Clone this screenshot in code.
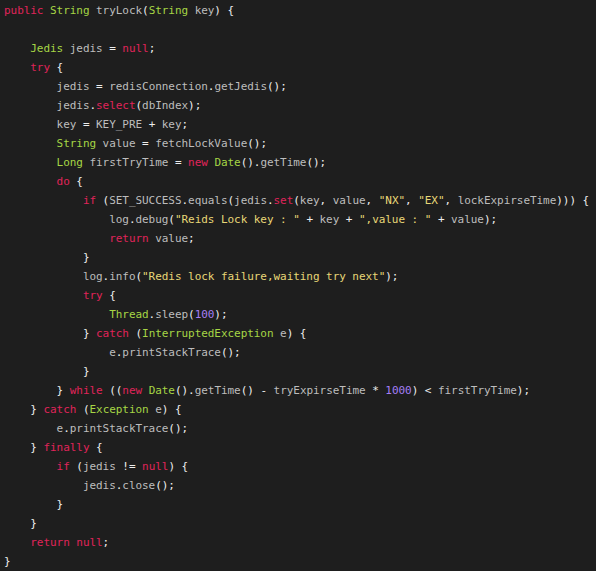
const LINES = [
  "public String tryLock(String key) {",
  "",
  "    Jedis jedis = null;",
  "    try {",
  "        jedis = redisConnection.getJedis();",
  "        jedis.select(dbIndex);",
  "        key = KEY_PRE + key;",
  "        String value = fetchLockValue();",
  "        Long firstTryTime = new Date().getTime();",
  "        do {",
  '            if (SET_SUCCESS.equals(jedis.set(key, value, "NX", "EX", lockExpirseTime))) {',
  '                log.debug("Reids Lock key : " + key + ",value : " + value);',
  "                return value;",
  "            }",
  '            log.info("Redis lock failure,waiting try next");',
  "            try {",
  "                Thread.sleep(100);",
  "            } catch (InterruptedException e) {",
  "                e.printStackTrace();",
  "            }",
  "        } while ((new Date().getTime() - tryExpirseTime * 1000) < firstTryTime);",
  "    } catch (Exception e) {",
  "        e.printStackTrace();",
  "    } finally {",
  "        if (jedis != null) {",
  "            jedis.close();",
  "        }",
  "    }",
  "    return null;",
  "}",
];

const KEYWORDS = ["public", "null", "try", "new", "do", "if", "return", "catch", "finally", "while", "select", "set"];
const TYPES = ["String", "Jedis", "Long", "Date", "Thread", "InterruptedException", "Exception"];

const COLORS = {
  kw: "text-[#e0245a]",
  type: "text-[#a6d645]",
  str: "text-[#e8d777]",
  num: "text-[#a57ef5]",
  punct: "text-[#eeeeee]",
  plain: "text-[#bdbdbd]",
  space: "",
};

function tokenize(line) {
  const re = /("[^"]*")|(\d+)|([A-Za-z_]\w*)|(\s+)|(.)/g;
  const out = [];
  let m;
  while ((m = re.exec(line))) {
    if (m[1]) out.push({ t: m[1], k: "str" });
    else if (m[2]) out.push({ t: m[2], k: "num" });
    else if (m[3]) out.push({ t: m[3], k: KEYWORDS.includes(m[3]) ? "kw" : TYPES.includes(m[3]) ? "type" : "plain" });
    else if (m[4]) out.push({ t: m[4], k: "space" });
    else out.push({ t: m[5], k: "punct" });
  }
  return out;
}

export default function App() {
  return (
    <div className="h-[571px] w-[596px] overflow-hidden bg-[#1e1e1e] pl-[4px] pt-[1px]">
      <pre className="font-['DejaVu_Sans_Mono','Liberation_Mono',monospace] text-[11px] leading-[19px] tracking-[-0.05px]">
        {LINES.map((line, i) => (
          <div key={i} className="h-[19px] whitespace-pre">
            {tokenize(line).map((tok, j) => (
              <span key={j} className={COLORS[tok.k]}>
                {tok.t}
              </span>
            ))}
          </div>
        ))}
      </pre>
    </div>
  );
}
